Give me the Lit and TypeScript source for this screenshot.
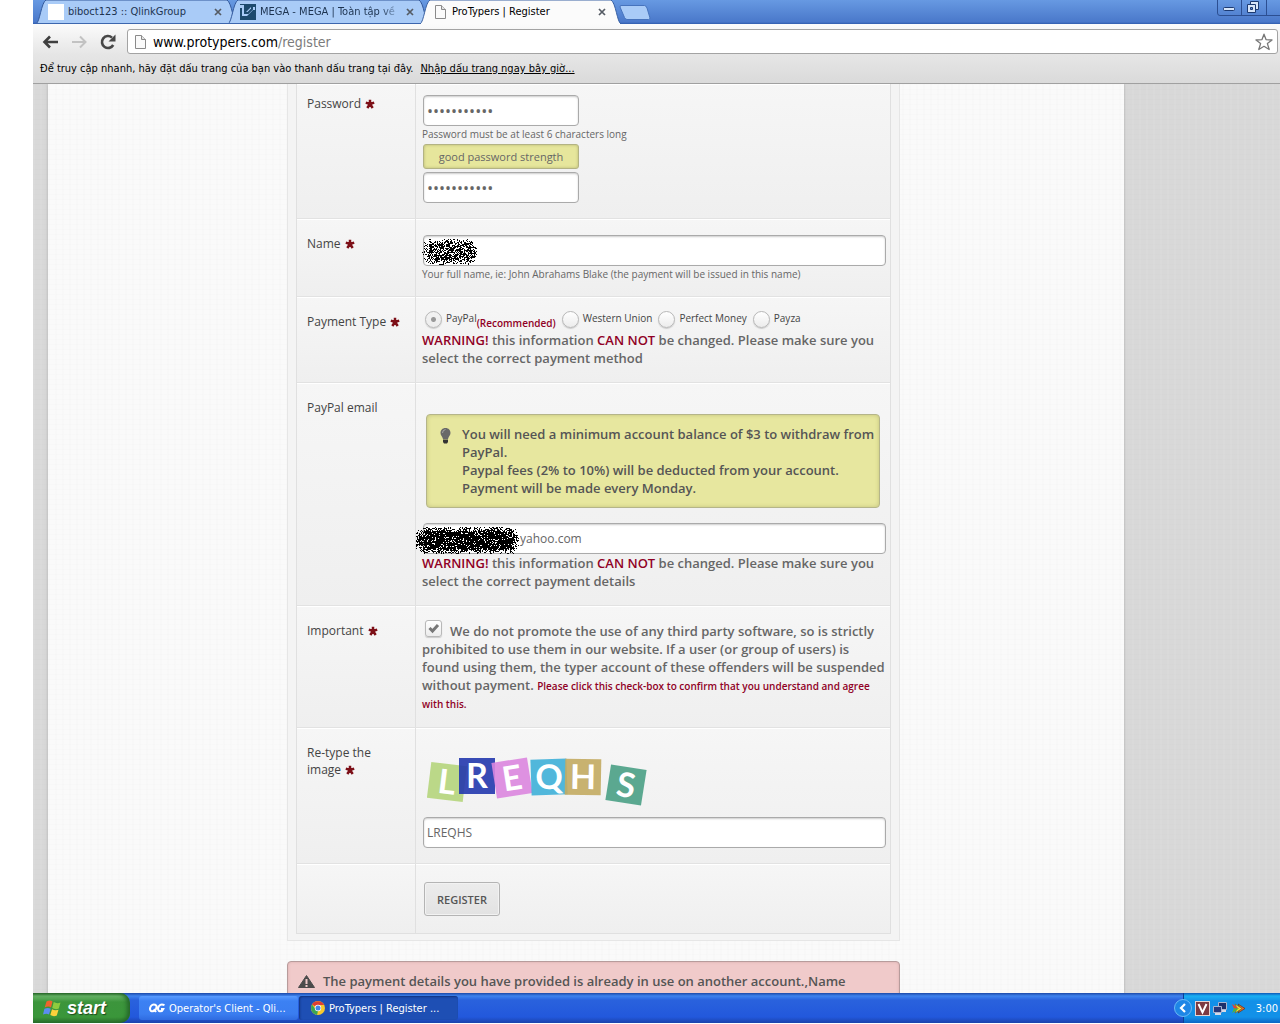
import { LitElement, html, css, svg } from "lit";
import { customElement } from "lit/decorators.js";

/** Speckled spray of one-pixel dots, denser towards the middle. */
function spray(width: number, height: number, seed: number, density: number): string {
  let state = seed;
  const next = () => {
    state = (state * 1664525 + 1013904223) % 4294967296;
    return state / 4294967296;
  };
  let d = "";
  for (let y = 0; y < height; y++) {
    for (let x = 0; x < width; x++) {
      const end = Math.max(0, 12 - x, x - (width - 13)) / 12;
      const v = Math.abs((y + 0.5 - height / 2) / (height / 2));
      const r = Math.sqrt(end * end + v * v);
      const chance = r < 0.6 ? density : density * Math.max(0, 1.12 - r) * 1.9;
      if (next() < chance) d += `M${x} ${y}h1v1h-1z`;
    }
  }
  return d;
}

const NAME_SPRAY = spray(56, 26, 7, 0.62);
const EMAIL_SPRAY = spray(105, 27, 21, 0.86);

const TILES = [
  { letter: "L", x: 25, y: 38, turn: 7, fill: "#b5d57c" },
  { letter: "R", x: 55, y: 32, turn: 0, fill: "#2338ae" },
  { letter: "E", x: 90, y: 34, turn: -9, fill: "#dc86df" },
  { letter: "Q", x: 127, y: 33, turn: -2, fill: "#3fb0d8" },
  { letter: "H", x: 161, y: 33, turn: 1, fill: "#c3ab62" },
  { letter: "S", x: 204, y: 41, turn: 9, fill: "#4aa085" },
];

const pageIcon = html`<svg class="page-icon" viewBox="0 0 11 14" aria-hidden="true">
  <path d="M.5.5h6l4 4v9h-10z" fill="#fafafa" stroke="#8a8a8a" />
  <path d="M6.500.5v4h4" fill="#e4e4e4" stroke="#8a8a8a" />
</svg>`;

const star = html`<svg class="required" viewBox="0 0 10 10" role="img" aria-label="required">
  <path d="M5 5V.8M5 5L.8 3.600M5 5L9.200 3.600M5 5L2.300 9M5 5L7.700 9" stroke="#7d1018" stroke-width="2.500" />
  <circle cx="5" cy="5" r="2" fill="#7d1018" />
</svg>`;

@customElement("browser-tabs")
export class BrowserTabs extends LitElement {
  static styles = css`
    :host {
      display: block;
    }
    .strip {
      display: flex;
      height: 24px;
      padding-left: 3px;
      background: linear-gradient(#6799e2, #4a78ca 22px, #2f5cad);
      overflow: hidden;
    }
    .tab {
      position: relative;
      flex: none;
      box-sizing: border-box;
      display: flex;
      align-items: center;
      gap: 4px;
      width: 201px;
      height: 24px;
      margin-right: -9px;
      padding: 0 15px 0 12px;
      color: #1d3350;
    }
    .active {
      z-index: 1;
      color: #000;
    }
    .shape {
      position: absolute;
      inset: 0;
      width: 100%;
      height: 100%;
    }
    .icon {
      position: relative;
      flex: none;
      width: 16px;
      height: 16px;
    }
    .active .icon {
      height: 14px;
    }
    .title {
      position: relative;
      flex: 1;
      overflow: hidden;
      white-space: nowrap;
      font-size: 11px;
      line-height: 16px;
    }
    .fade {
      mask-image: linear-gradient(90deg, #000 85%, transparent);
    }
    .page-icon {
      display: block;
      width: 11px;
      height: 14px;
      margin-left: 3px;
    }
    button {
      position: relative;
      flex: none;
      border: 0;
      padding: 0;
      background: none;
    }
    .close {
      width: 8px;
      height: 8px;
    }
    .close svg,
    .new svg,
    .windows svg {
      display: block;
    }
    .new {
      align-self: flex-start;
      margin: 5px 0 0 7px;
    }
    .windows {
      display: flex;
      align-self: flex-start;
      margin-left: auto;
    }
  `;

  private tab(title: string, icon: unknown, active = false, fade = false) {
    return html`<div class="tab ${active ? "active" : ""}">
      <svg class="shape" viewBox="0 0 201 24" preserveAspectRatio="none" aria-hidden="true">
        <path
          d="M0 24C4 22 5 3 10 0H191C196 3 197 22 201 24Z"
          fill=${active ? "#fbfbfb" : "#a9cbf7"}
          stroke=${active ? "#3a62a4" : "#33599c"}
        />
        ${active ? svg`<path d="M1 24H200" stroke="#fbfbfb" stroke-width="2" />` : svg`<path d="M0 23.500H201" stroke="#3c66ae" />`}
      </svg>
      <span class="icon">${icon}</span>
      <span class="title ${fade ? "fade" : ""}">${title}</span>
      <button class="close" aria-label="Close tab">
        <svg width="8" height="8" viewBox="0 0 8 8">
          <path d="M1 1L7 7M7 1L1 7" stroke="#555b64" stroke-width="1.700" />
        </svg>
      </button>
    </div>`;
  }

  render() {
    return html`<div class="strip">
      ${this.tab("biboct123 :: QlinkGroup", html`<svg width="16" height="16"><rect width="16" height="16" fill="#fff" /></svg>`)}
      ${this.tab(
        "MEGA - MEGA | Toàn tập về",
        html`<svg width="16" height="16" viewBox="0 0 16 16">
          <rect width="16" height="16" fill="#1d4a6e" />
          <path d="M0 1H6V8L11 3H15V6H13L7 12H2V4H0Z" fill="#a9cbf7" />
          <path d="M1 0H5V9H8L12 5V3" fill="none" stroke="#1d4a6e" stroke-width="2" />
        </svg>`,
        false,
        true,
      )}
      ${this.tab("ProTypers | Register", pageIcon, true)}
      <button class="new" aria-label="New tab">
        <svg width="32" height="15" viewBox="0 0 32 15">
          <path d="M1.500.5H25.500Q27 .5 28 3L31 13Q31 14.500 29.500 14.500H8Q6.500 14.500 5.500 12.500L1 2Z" fill="#a9cbf7" stroke="#4673bd" />
        </svg>
      </button>
      <div class="windows">
        <button aria-label="Minimize">
          <svg width="25" height="16" viewBox="0 0 25 16">
            <path d="M.5 0V13Q.5 15.500 3 15.500H25M24.500 0V16" fill="none" stroke="#2c4f92" />
            <rect x="6.500" y="7.500" width="11" height="3" rx="1" fill="#d7e5f8" stroke="#1c3a72" />
          </svg>
        </button>
        <button aria-label="Restore">
          <svg width="25" height="16" viewBox="0 0 25 16">
            <path d="M0 15.500H25M24.500 0V16" fill="none" stroke="#2c4f92" />
            <path d="M8.500 1.500h8v8h-8z" fill="#d7e5f8" stroke="#1c3a72" />
            <path d="M5.500 4.500h8v8h-8z" fill="#d7e5f8" stroke="#1c3a72" />
            <path d="M8.500 7.500h2v2h-2z" fill="#5a88d4" stroke="#1c3a72" />
          </svg>
        </button>
        <button aria-label="Close">
          <svg width="13" height="16" viewBox="0 0 13 16"><path d="M0 15.500H13" stroke="#2c4f92" /></svg>
        </button>
      </div>
    </div>`;
  }
}

@customElement("browser-toolbar")
export class BrowserToolbar extends LitElement {
  static styles = css`
    :host {
      display: block;
    }
    .bar {
      display: flex;
      align-items: center;
      height: 30px;
      padding: 0 2px 0 9px;
      background: linear-gradient(#fbfbfb, #e6e6e6);
    }
    button {
      flex: none;
      display: flex;
      border: 0;
      padding: 0;
      background: none;
    }
    .nav {
      width: 29px;
      margin-top: 5px;
    }
    .address {
      flex: 1;
      display: flex;
      align-items: center;
      gap: 7px;
      box-sizing: border-box;
      height: 25px;
      margin-top: 5px;
      margin-left: -2px;
      padding: 0 4px 0 7px;
      border: 1px solid #a3a3a3;
      border-radius: 3px;
      background: #fff;
    }
    .url {
      flex: 1;
      outline: 0;
      font-size: 14px;
      line-height: 18px;
      color: #000;
    }
    .path {
      color: #7b7b7b;
    }
    .page-icon {
      width: 11px;
      height: 14px;
    }
    .bookmarks {
      display: flex;
      align-items: center;
      gap: 7px;
      box-sizing: border-box;
      height: 30px;
      padding: 1px 7px 0;
      border-bottom: 1px solid #a0a0a0;
      background: linear-gradient(#e6e6e6, #dadada);
      font-size: 11px;
      line-height: 16px;
      white-space: nowrap;
    }
    a {
      color: #000;
    }
  `;

  render() {
    return html`
      <div class="bar">
        <button class="nav" aria-label="Back">
          <svg width="17" height="14" viewBox="0 0 17 14">
            <path d="M16 7H3M8 1.500L2.500 7L8 12.500" fill="none" stroke="#3f3f3f" stroke-width="2.600" />
          </svg>
        </button>
        <button class="nav" aria-label="Forward">
          <svg width="17" height="14" viewBox="0 0 17 14">
            <path d="M1 7H14M9 1.500L14.500 7L9 12.500" fill="none" stroke="#c2c2c2" stroke-width="2" />
          </svg>
        </button>
        <button class="nav" aria-label="Reload">
          <svg width="17" height="16" viewBox="0 0 17 16">
            <path d="M13.200 11A6 6 0 1 1 12 3.600" fill="none" stroke="#474747" stroke-width="2.600" />
            <path d="M15.500.5V7.500H8.500Z" fill="#474747" />
          </svg>
        </button>
        <div class="address">
          ${pageIcon}
          <div class="url" role="textbox" aria-label="Address" contenteditable="true" spellcheck="false">www.protypers.com<span class="path">/register</span></div>
          <button aria-label="Bookmark this page">
            <svg width="18" height="18" viewBox="0 0 18 18">
              <path d="M9 1.200L11 6.600L17 7L12.400 10.600L14.200 16.500L9 13.300L3.800 16.500L5.600 10.600L1 7L7 6.600Z" fill="#fff" stroke="#777" stroke-width="1.300" stroke-linejoin="round" />
            </svg>
          </button>
        </div>
      </div>
      <div class="bookmarks">
        <span>Để truy cập nhanh, hãy đặt dấu trang của bạn vào thanh dấu trang tại đây.</span>
        <a href="#import">Nhập dấu trang ngay bây giờ...</a>
      </div>
    `;
  }
}

@customElement("register-form")
export class RegisterForm extends LitElement {
  static styles = css`
    :host {
      display: block;
      font-family: "Open Sans", "Noto Sans", sans-serif;
      color: #666;
    }
    .panel {
      padding: 0 8px 6px;
      border: 1px solid #e6e6e6;
      border-top: 0;
      background: #f4f4f4;
    }
    .rows {
      border: 1px solid #e0e0e0;
      border-top: 0;
    }
    .row {
      display: grid;
      grid-template-columns: 119px minmax(0, 1fr);
      border-bottom: 1px solid #e2e2e2;
      box-shadow: inset 0 1px #fff;
      background: linear-gradient(#f6f6f6, #efefef);
    }
    .row:last-child {
      border-bottom: 0;
    }
    .label,
    .field {
      padding: 16px 4px 15px 6px;
    }
    .label {
      padding-left: 10px;
      border-right: 1px solid #e0e0e0;
      font-size: 12px;
      line-height: 17px;
      color: #444;
    }
    .first .label,
    .first .field {
      padding-top: 11px;
    }
    .required {
      width: 10px;
      height: 10px;
      margin-left: 1px;
      vertical-align: -1px;
    }
    .box {
      position: relative;
    }
    .text {
      display: block;
      box-sizing: border-box;
      width: calc(100% - 1px);
      height: 31px;
      margin-left: 1px;
      padding: 0 3px;
      border: 1px solid #aaa;
      border-radius: 4px;
      background: #fff;
      box-shadow: inset 0 1px 2px #ccc;
      font: 12px "Open Sans", "Noto Sans", sans-serif;
      color: #666;
    }
    .secret,
    .strength {
      width: 156px;
    }
    .secret {
      font-size: 16px;
    }
    .email {
      padding-left: 96px;
    }
    .spray {
      position: absolute;
      left: 0;
      top: 4px;
    }
    .email-spray {
      left: -7px;
    }
    .hint {
      padding-top: 1px;
      font-size: 10px;
      line-height: 15px;
    }
    .hint:last-child {
      margin-bottom: -1px;
    }
    .strength {
      box-sizing: border-box;
      height: 25px;
      margin: 2px 0 3px 1px;
      border: 1px solid #b3b384;
      border-radius: 3px;
      background: #e6e69c;
      box-shadow: inset 0 0 3px #b5b573;
      font-size: 11px;
      line-height: 23px;
      text-align: center;
    }
    .copy {
      margin: 0;
      font-size: 13px;
      font-weight: 600;
      line-height: 18px;
    }
    .alert-red {
      color: #900025;
    }
    .small {
      font-size: 10px;
      line-height: 16px;
    }
    .choices {
      display: flex;
      gap: 6px;
      height: 20px;
      margin: -2px 0 0 3px;
      white-space: nowrap;
    }
    .choice {
      display: flex;
      gap: 4px;
      font-size: 10px;
      line-height: 15px;
      color: #444;
    }
    .radio,
    .check {
      appearance: none;
      flex: none;
      box-sizing: border-box;
      width: 17px;
      height: 17px;
      margin: 0;
      border: 1px solid #b8b8b8;
      border-radius: 9px;
      background: linear-gradient(#fff, #ececec);
      box-shadow: 0 1px 1px #ccc;
    }
    .radio:checked {
      background: radial-gradient(circle, #999 2px, transparent 3px), linear-gradient(#f3f3f3, #ececec);
    }
    .recommended {
      align-self: flex-end;
      margin-left: -6px;
      font-weight: 600;
      font-size: 10px;
      line-height: 16px;
    }
    .check-wrap {
      position: relative;
      display: inline-block;
      width: 17px;
      height: 18px;
      margin: 0 8px 0 3px;
      vertical-align: top;
    }
    .check {
      display: block;
      border-radius: 3px;
      margin-top: -2px;
    }
    .tick {
      position: absolute;
      left: 3px;
      top: 1px;
      pointer-events: none;
    }
    .notice,
    .error {
      display: flex;
      gap: 8px;
      padding: 10px;
      border: 1px solid #b5b58a;
      border-radius: 4px;
      background: #e7e79f;
      box-shadow: inset 0 0 4px #c2c27c;
      color: #555;
    }
    .notice {
      margin: 15px 6px 15px 4px;
      white-space: nowrap;
    }
    .notice svg,
    .error svg {
      flex: none;
    }
    .captcha {
      display: block;
      height: 73px;
    }
    .register {
      display: block;
      height: 34px;
      margin: 2px;
      padding: 0 12px;
      border: 1px solid #b4b4b4;
      border-radius: 3px;
      background: linear-gradient(#ececec, #e2e2e2);
      box-shadow: inset 0 0 0 1px #f2f2f2;
      font: 600 11px "Open Sans", sans-serif;
      color: #555;
    }
    .error {
      margin-top: 20px;
      padding-bottom: 30px;
      border-color: #b79c9c;
      background: #f0caca;
      box-shadow: inset 0 0 3px #d8adad;
    }
  `;

  private warning(last: string) {
    return html`<p class="copy">
      <span class="alert-red">WARNING!</span> this information <span class="alert-red">CAN NOT</span> be changed. Please
      make sure you<br />select the correct payment ${last}
    </p>`;
  }

  private choice(name: string, checked = false) {
    return html`<label class="choice"><input class="radio" type="radio" name="payment" .checked=${checked} />${name}</label>`;
  }

  render() {
    return html`
      <form class="panel" @submit=${(e: Event) => e.preventDefault()}>
        <div class="rows">
          <div class="row first">
            <label class="label" for="password">Password ${star}</label>
            <div class="field">
              <input class="text secret" id="password" type="password" value="abcdefghijk" />
              <div class="hint">Password must be at least 6 characters long</div>
              <div class="strength">good password strength</div>
              <input class="text secret" type="password" aria-label="Repeat password" value="abcdefghijk" />
            </div>
          </div>
          <div class="row">
            <label class="label" for="name">Name ${star}</label>
            <div class="field">
              <div class="box">
                <input class="text" id="name" type="text" />
                <svg class="spray" width="58" height="27" shape-rendering="crispEdges"><path d=${NAME_SPRAY} /></svg>
              </div>
              <div class="hint">Your full name, ie: John Abrahams Blake (the payment will be issued in this name)</div>
            </div>
          </div>
          <div class="row">
            <div class="label">Payment Type ${star}</div>
            <div class="field">
              <div class="choices" role="radiogroup" aria-label="Payment Type">
                ${this.choice("PayPal", true)}<span class="recommended alert-red">(Recommended)</span>
                ${this.choice("Western Union")} ${this.choice("Perfect Money")} ${this.choice("Payza")}
              </div>
              ${this.warning("method")}
            </div>
          </div>
          <div class="row">
            <label class="label" for="email">PayPal email</label>
            <div class="field">
              <div class="notice">
                <svg width="17" height="20" viewBox="0 0 17 20" aria-hidden="true">
                  <path d="M8.500 3C5.300 3 3.500 5.200 3.500 8C3.500 10.600 5.600 11.600 6 14H11C11.400 11.600 13.500 10.600 13.500 8C13.500 5.200 11.700 3 8.500 3Z" fill="#696969" />
                  <path d="M5.500 8Q5.500 5 8.500 4.500" fill="none" stroke="#a5a5a5" />
                  <path d="M6 14.500H11V17L10 18.500H7L6 17Z" fill="#333" />
                </svg>
                <p class="copy">
                  You will need a minimum account balance of $3 to withdraw from<br />PayPal.<br />Paypal fees (2% to 10%)
                  will be deducted from your account.<br />Payment will be made every Monday.
                </p>
              </div>
              <div class="box">
                <input class="text email" id="email" type="text" value="yahoo.com" />
                <svg class="spray email-spray" width="105" height="27" shape-rendering="crispEdges"><path d=${EMAIL_SPRAY} /></svg>
              </div>
              ${this.warning("details")}
            </div>
          </div>
          <div class="row">
            <label class="label" for="agree">Important ${star}</label>
            <div class="field">
              <p class="copy">
                <span class="check-wrap"
                  ><input class="check" id="agree" type="checkbox" checked /><svg class="tick" width="12" height="11" viewBox="0 0 12 11">
                    <path d="M1.500 5L4.500 8L10 2" fill="none" stroke="#777" stroke-width="3" /></svg></span
                >We do not promote the use of any third party software, so is strictly<br />prohibited to use them in our
                website. If a user (or group of users) is<br />found using them, the typer account of these offenders
                will be suspended<br />without payment.
                <span class="small alert-red"
                  >Please click this check-box to confirm that you understand and agree<br />with this.</span
                >
              </p>
            </div>
          </div>
          <div class="row">
            <label class="label" for="captcha">Re-type the<br />image ${star}</label>
            <div class="field">
              <svg class="captcha" width="240" height="73" viewBox="0 0 240 73">
                ${TILES.map(
                  (t) => svg`<g transform="translate(${t.x} ${t.y}) rotate(${t.turn})">
                    <rect x="-18" y="-18" width="36" height="36" fill=${t.fill} fill-opacity="0.9" />
                    <text y="12" text-anchor="middle" font-family="Lato, sans-serif" font-weight="700" font-size="34" fill="#fff">${t.letter}</text>
                  </g>`,
                )}
              </svg>
              <input class="text" id="captcha" type="text" value="LREQHS" />
            </div>
          </div>
          <div class="row">
            <div class="label"></div>
            <div class="field"><button class="register" type="submit">REGISTER</button></div>
          </div>
        </div>
      </form>
      <div class="error" role="alert">
        <svg width="17" height="18" viewBox="0 0 17 18" aria-hidden="true">
          <path d="M8.500 3.500L16.500 15.500H.5Z" fill="#4b4b4b" stroke="#4b4b4b" stroke-linejoin="round" />
          <path d="M8.500 7V12M8.500 13V15" stroke="#efc9c9" stroke-width="2" />
        </svg>
        <p class="copy">The payment details you have provided is already in use on another account.,Name</p>
      </div>
    `;
  }
}

@customElement("task-bar")
export class TaskBar extends LitElement {
  static styles = css`
    :host {
      display: block;
    }
    .bar {
      display: flex;
      height: 30px;
      background: linear-gradient(#1c49a8, #3f83ee 3px, #2a62dd 7px, #2258dc 24px, #1b43ab);
    }
    button {
      display: flex;
      align-items: center;
      box-sizing: border-box;
      border: 0;
      color: #fff;
      font-family: inherit;
      text-align: left;
      white-space: nowrap;
    }
    .start {
      gap: 4px;
      width: 97px;
      margin-right: 9px;
      padding: 0 0 0 10px;
      border-radius: 0 10px 10px 0;
      background: linear-gradient(#2c6a2b, #67b466 3px, #3c953c 9px, #3a963a 24px, #2b6f2c);
      box-shadow: inset -3px 0 4px #24672a;
      font: italic bold 18px "Liberation Sans", sans-serif;
      text-shadow: 1px 1px 1px #1c4a1c;
    }
    .task {
      gap: 4px;
      width: 159px;
      height: 24px;
      margin: 3px 1px 3px 0;
      padding: 0 10px;
      border-radius: 3px;
      background: linear-gradient(#5a9cff, #3c81f3 5px, #3a7df0 18px, #2f6be0);
      font-size: 11px;
    }
    .current {
      background: #1e4fb4;
      box-shadow: inset 1px 1px 2px #12337f;
      padding-left: 12px;
    }
    .tray {
      display: flex;
      align-items: center;
      gap: 3px;
      margin-left: auto;
      padding: 0 2px 0 0;
      border-left: 1px solid #0e3f94;
      background: linear-gradient(#0c59b9, #19b0f3 3px, #1290e8 8px, #1291e8 24px, #0c65c4);
      color: #fff;
      font-size: 11px;
    }
    .tray button {
      margin-left: -10px;
      padding: 0;
      background: none;
    }
    .clock {
      margin-left: 7px;
    }
  `;

  render() {
    return html`<div class="bar">
      <button class="start">
        <svg width="20" height="18" viewBox="0 0 20 18" aria-hidden="true">
          <path d="M3.500 2.500Q7 .5 9.500 2.500L8 8.500Q5.500 6.500 1.700 8.500Z" fill="#f0622d" />
          <path d="M10.700 3Q14 5 17.500 3.500L15.800 9.500Q12.500 11 9.200 9Z" fill="#8ecb3e" />
          <path d="M1.400 9.800Q5 8 7.700 9.800L6 15.500Q3.500 13.800 0 15.500Z" fill="#5b8df0" />
          <path d="M9 10.200Q12 12 15.500 10.800L13.800 16.500Q10.500 18 7.300 16Z" fill="#fbd13b" />
        </svg>
        start
      </button>
      <button class="task">
        <svg width="16" height="16" viewBox="0 0 16 16" aria-hidden="true">
          <path d="M7 5Q4 3.500 2 6Q0 9 2 11Q5 12 7 9Q8 6.500 7 5M5 9L7 12M15.500 5.200Q12 3.500 10 6Q8 9 10 11Q13 12 14.300 9H12" fill="none" stroke="#fff" stroke-width="2" />
        </svg>
        Operator's Client - Qli...
      </button>
      <button class="task current">
        <svg width="14" height="14" viewBox="0 0 14 14" aria-hidden="true">
          <circle cx="7" cy="7" r="7" fill="#f5c92f" />
          <path d="M7 7L1 3.500A7 7 0 0 1 13.200 4H7Z" fill="#dd3f34" />
          <path d="M1 3.500L5 9L7 10L6 13.900A7 7 0 0 1 1 3.500Z" fill="#3ba553" />
          <circle cx="7" cy="7" r="3.200" fill="#fff" />
          <circle cx="7" cy="7" r="2.500" fill="#4585e8" />
        </svg>
        ProTypers | Register ...
      </button>
      <div class="tray">
        <button aria-label="Show hidden icons">
          <svg width="18" height="18" viewBox="0 0 18 18">
            <circle cx="9" cy="9" r="8.500" fill="#1e86e6" stroke="#6bb9f5" />
            <path d="M11 5L7 9L11 13" fill="none" stroke="#fff" stroke-width="2.200" />
          </svg>
        </button>
        <svg width="15" height="15" viewBox="0 0 15 15" aria-hidden="true">
          <rect x=".5" y=".5" width="14" height="14" fill="#7c3a42" stroke="#e4d4d4" />
          <path d="M3.500 3L7.500 11.500L11.500 3" fill="none" stroke="#fff" stroke-width="2" />
        </svg>
        <svg width="15" height="15" viewBox="0 0 15 15" aria-hidden="true">
          <path d="M5.500 1.500h8v7h-8z" fill="#1d2f6a" stroke="#a9b4cf" />
          <path d="M.5 5.500h8v6h-8z" fill="#26387a" stroke="#a9b4cf" />
          <path d="M2 13h6M9 10h4" stroke="#d5dae6" stroke-width="2" />
        </svg>
        <svg width="15" height="15" viewBox="0 0 15 15" aria-hidden="true">
          <path d="M7 3L14 7.500L7 12L9 7.500Z" fill="#e8622e" stroke="#5f3b12" stroke-width=".7" />
          <path d="M4 3L11 7.500L4 12L6 7.500Z" fill="#f6e52f" stroke="#7f6b12" stroke-width=".7" />
          <path d="M1 3L8 7.500H3Z" fill="#e8432e" />
          <path d="M1 12L8 7.500H3Z" fill="#4fb53a" />
        </svg>
        <span class="clock">3:00</span>
      </div>
    </div>`;
  }
}

@customElement("app-root")
export class AppRoot extends LitElement {
  static styles = css`
    :host {
      display: block;
      font-family: "DejaVu Sans Condensed", "DejaVu Sans", sans-serif;
      background: #fff;
    }
    .screen {
      display: flex;
      flex-direction: column;
      box-sizing: border-box;
      height: 100vh;
      padding: 0 0 1px 33px;
    }
    .viewport {
      flex: 1;
      min-height: 0;
      overflow: hidden;
      display: grid;
      grid-template-columns: minmax(0, 1fr);
      padding: 0 156px 0 15px;
      background:
        repeating-linear-gradient(90deg, rgba(255, 255, 255, 0.06) 0 2px, transparent 2px 7px),
        repeating-linear-gradient(rgba(0, 0, 0, 0.006) 0 1px, transparent 1px 5px), #d8d8d8;
    }
    .sheet {
      padding: 0 224px 0 239px;
      box-shadow: 0 0 3px #aaa;
      background:
        repeating-linear-gradient(90deg, rgba(0, 0, 0, 0.006) 0 2px, transparent 2px 7px),
        repeating-linear-gradient(rgba(0, 0, 0, 0.006) 0 1px, transparent 1px 5px), #fafafa;
    }
  `;

  render() {
    return html`<div class="screen">
      <browser-tabs></browser-tabs>
      <browser-toolbar></browser-toolbar>
      <main class="viewport">
        <div class="sheet"><register-form></register-form></div>
      </main>
      <task-bar></task-bar>
    </div>`;
  }
}
